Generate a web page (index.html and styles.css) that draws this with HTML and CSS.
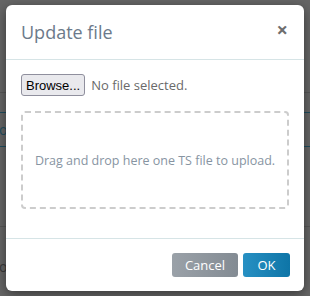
FILE: index.html
```html
<!DOCTYPE html>
<html lang="en">
<head>
    <meta charset="UTF-8">
    <title>Update file</title>
    <link rel="stylesheet" href="styles.css">
</head>
<body>
    <div class="page-behind">
        <div class="bg-row bg-top"></div>
        <div class="bg-row bg-head"></div>
        <div class="bg-row bg-item"><span>o(</span></div>
        <div class="bg-row bg-space"></div>
        <div class="bg-row bg-last"><span>o</span></div>
    </div>

    <div class="modal" role="dialog" aria-label="Update file">
        <div class="modal-header">
            <h4 class="modal-title">Update file</h4>
            <button class="close" aria-label="Close">&times;</button>
        </div>
        <div class="modal-body">
            <div class="file-picker">
                <button class="browse">Browse...</button>
                <span class="file-name">No file selected.</span>
            </div>
            <div class="dropzone">
                Drag and drop here one TS file to upload.
            </div>
        </div>
        <div class="modal-footer">
            <button class="btn btn-cancel">Cancel</button>
            <button class="btn btn-ok">OK</button>
        </div>
    </div>
</body>
</html>
```

FILE: styles.css
```css
body {
    margin: 0;
    background: #666666;
    font-family: 'Open Sans', 'Liberation Sans', sans-serif;
    font-size: 13px;
    overflow: hidden;
}
.page-behind {
    display: flex;
    flex-direction: column;
}
.bg-row {
    border-bottom: 1px solid #575757;
}
.bg-top {
    height: 92px;
}
.bg-head {
    height: 19px;
    border-bottom-color: #1f4d5f;
}
.bg-item {
    height: 33px;
    border-bottom-color: #1f4d5f;
    display: flex;
    align-items: center;
    color: #234e60;
    font-size: 14px;
}
.bg-item span {
    margin-left: -1px;
}
.bg-space {
    height: 79px;
}
.bg-last {
    border-bottom: none;
    padding-top: 30px;
    color: #3a3a3a;
    font-size: 14px;
}
.bg-last span {
    margin-left: -1px;
}
.modal {
    position: absolute;
    left: 6px;
    top: 5px;
    width: 298px;
    background: white;
    border-radius: 6px;
    box-shadow: 0 3px 12px rgba(0,0,0,0.45);
}
.modal-header {
    display: flex;
    justify-content: space-between;
    align-items: center;
    padding: 15px 15px 14px;
    border-bottom: 1px solid #d6e4e6;
}
.modal-title {
    margin: 0;
    font-size: 18px;
    font-weight: 400;
    line-height: 25px;
    color: #6c7a8a;
}
.close {
    border: none;
    background: none;
    padding: 0;
    margin-top: -6px;
    margin-right: 1px;
    font-family: 'Open Sans', sans-serif;
    font-size: 20px;
    font-weight: 700;
    line-height: 1;
    color: #555555;
    opacity: 0.85;
}
.modal-body {
    padding: 14px 15px 29px;
}
.file-picker {
    display: flex;
    align-items: center;
    gap: 6px;
}
.browse {
    height: 22px;
    padding: 0 4px;
    border: 1px solid #8f8f9d;
    border-radius: 3px;
    background: #e9e9ed;
    font-family: 'Liberation Sans', sans-serif;
    font-size: 13px;
    color: #000;
}
.file-name {
    color: #6a6a6a;
}
.dropzone {
    margin-top: 15px;
    height: 94px;
    border: 2px dashed #cccccc;
    border-radius: 4px;
    display: flex;
    align-items: center;
    justify-content: center;
    color: #8794a2;
    font-size: 12.5px;
}
.modal-footer {
    display: flex;
    justify-content: flex-end;
    gap: 5px;
    padding: 14px;
    border-top: 1px solid #d6e4e6;
}
.btn {
    height: 24px;
    border: none;
    border-radius: 3px;
    font-family: 'Open Sans', sans-serif;
    font-size: 13px;
    color: white;
}
.btn-cancel {
    width: 66px;
    background: linear-gradient(to right, #9aa1a8, #838b93);
}
.btn-ok {
    width: 47px;
    background: linear-gradient(to right, #2790c3, #0e75a7);
}
```
